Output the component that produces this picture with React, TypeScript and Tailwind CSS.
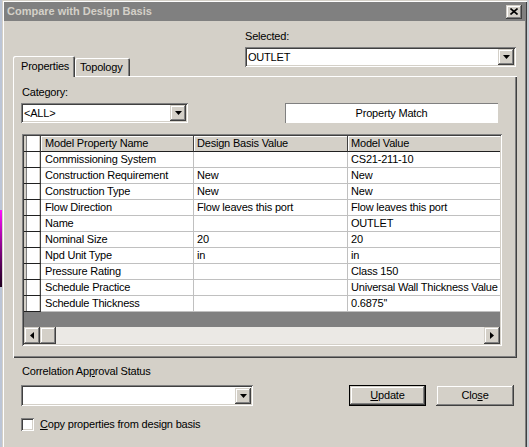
import React from "react";

const raised =
  "shadow-[inset_-1px_-1px_#404040,inset_1px_1px_#d4d0c8,inset_-2px_-2px_#808080,inset_2px_2px_#ffffff]";
const sunken =
  "shadow-[inset_1px_1px_#808080,inset_-1px_-1px_#ffffff,inset_2px_2px_#404040,inset_-2px_-2px_#d4d0c8]";

function DownArrow() {
  return (
    <svg width="7" height="4" viewBox="0 0 7 4">
      <polygon points="0,0 7,0 3.5,4" fill="#000" />
    </svg>
  );
}

function DropBtn() {
  return (
    <div className={`w-[16px] h-[16px] bg-[#d4d0c8] flex items-center justify-center ${raised}`}>
      <DownArrow />
    </div>
  );
}

function Combo({ text, w, h }: { text: string; w: string; h: string }) {
  return (
    <div className={`${w} ${h} bg-white ${sunken} p-[2px] flex items-center`}>
      <div className="flex-1 pl-[1px] leading-[13px] whitespace-nowrap overflow-hidden">{text}</div>
      <DropBtn />
    </div>
  );
}

type Row = [string, string, string];
const rows: Row[] = [
  ["Commissioning System", "", "CS21-211-10"],
  ["Construction Requirement", "New", "New"],
  ["Construction Type", "New", "New"],
  ["Flow Direction", "Flow leaves this port", "Flow leaves this port"],
  ["Name", "", "OUTLET"],
  ["Nominal Size", "20", "20"],
  ["Npd Unit Type", "in", "in"],
  ["Pressure Rating", "", "Class 150"],
  ["Schedule Practice", "", "Universal Wall Thickness Value"],
  ["Schedule Thickness", "", "0.6875''"],
];

function RowHead() {
  return (
    <div className="w-[17px] h-full shrink-0 bg-[#d4d0c8] border-r border-b border-r-[#404040] border-b-[#202020] pl-[2px]">
      <div className="w-[13px] h-full bg-white border-l border-[#808080]" />
    </div>
  );
}

function Grid() {
  return (
    <div className={`w-[480px] h-[212px] ml-[9px] bg-white ${sunken} p-[2px]`}>
      <div className="w-full h-full flex flex-col overflow-hidden">
        {/* header */}
        <div className="h-[16px] flex bg-[#d4d0c8] shrink-0">
          <RowHead />
          <div className="w-[153px] h-full shrink-0 border-r border-b border-r-[#404040] border-b-[#202020] pl-[4px] leading-[15px] shadow-[inset_1px_1px_#ffffff] whitespace-nowrap">
            Model Property Name
          </div>
          <div className="w-[154px] h-full shrink-0 border-r border-b border-r-[#404040] border-b-[#202020] pl-[3px] leading-[15px] shadow-[inset_1px_1px_#ffffff] whitespace-nowrap">
            Design Basis Value
          </div>
          <div className="flex-1 h-full border-b border-b-[#202020] pl-[3px] leading-[15px] shadow-[inset_1px_1px_#ffffff] whitespace-nowrap">
            Model Value
          </div>
        </div>
        {rows.map((r) => (
          <div key={r[0]} className="h-[16px] flex shrink-0">
            <RowHead />
            <div className="w-[153px] h-full shrink-0 border-r border-b border-[#c0c0c0] pl-[4px] leading-[15px] whitespace-nowrap overflow-hidden">
              {r[0]}
            </div>
            <div className="w-[154px] h-full shrink-0 border-r border-b border-[#c0c0c0] pl-[3px] leading-[15px] whitespace-nowrap overflow-hidden">
              {r[1]}
            </div>
            <div className="flex-1 h-full border-b border-[#c0c0c0] pl-[3px] leading-[15px] whitespace-nowrap overflow-hidden">
              {r[2]}
            </div>
          </div>
        ))}
        <div className="h-[15px] shrink-0 bg-[#808080]" />
        {/* scrollbar */}
        <div className="h-[17px] shrink-0 flex bg-[#ebe9e5]">
          <div className={`w-[16px] h-[17px] bg-[#d4d0c8] flex items-center justify-center ${raised}`}>
            <svg width="4" height="7" viewBox="0 0 4 7">
              <polygon points="4,0 4,7 0,3.5" fill="#000" />
            </svg>
          </div>
          <div className={`w-[16px] h-[17px] bg-[#d4d0c8] ${raised}`} />
          <div className="flex-1" />
          <div className={`w-[16px] h-[17px] bg-[#d4d0c8] flex items-center justify-center ${raised}`}>
            <svg width="4" height="7" viewBox="0 0 4 7">
              <polygon points="0,0 0,7 4,3.5" fill="#000" />
            </svg>
          </div>
        </div>
      </div>
    </div>
  );
}

export default function App() {
  return (
    <div className="w-[529px] h-[447px] flex overflow-hidden font-['Liberation_Sans',Arial,sans-serif] text-[11px] text-black tracking-[-0.2px] select-none">
      {/* desktop strip */}
      <div className="w-[2px] h-full flex flex-col shrink-0">
        <div className="h-[210px] bg-[#bcc5d6]" />
        <div className="h-[77px] bg-linear-to-b from-[#ff10ff] to-[#200020]" />
        <div className="flex-1 bg-[#bcc5d6]" />
      </div>

      {/* window */}
      <div className="w-[525px] h-full shrink-0 bg-[#d4d0c8] pt-[2px] px-[2px] flex flex-col shadow-[inset_1px_1px_#d4d0c8,inset_2px_2px_#ffffff,inset_-1px_0_#404040,inset_-2px_0_#808080]">
        {/* title bar */}
        <div className="h-[19px] shrink-0 bg-[#808080] flex items-center pl-[3px] pr-[3px]">
          <div className="flex-1 font-bold text-[11px] tracking-[0px] text-[#d4d0c8] leading-[13px]">
            Compare with Design Basis
          </div>
          <div className={`w-[16px] h-[14px] bg-[#d4d0c8] flex items-center justify-center ${raised}`}>
            <svg width="8" height="7" viewBox="0 0 8 7">
              <path d="M0.5 0.5 L7.5 6.5 M7.5 0.5 L0.5 6.5" stroke="#000" strokeWidth="1.6" />
            </svg>
          </div>
        </div>

        {/* top area: tabs + selected */}
        <div className="h-[55px] shrink-0 flex items-end">
          <div className="ml-[9px] flex items-end -mb-[1px] relative z-10">
            <div className="w-[62px] h-[21px] bg-[#d4d0c8] rounded-t-[2px] pl-[8px] pt-[4px] leading-[13px] shadow-[inset_1px_1px_#ffffff,inset_-1px_0_#404040,inset_-2px_0_#808080]">
              Properties
            </div>
            <div className="w-[55px] h-[18px] mb-[1px] bg-[#d4d0c8] rounded-t-[2px] pl-[5px] pt-[3px] leading-[13px] shadow-[inset_1px_1px_#ffffff,inset_-1px_0_#404040,inset_-2px_0_#808080]">
              Topology
            </div>
          </div>
          <div className="ml-auto mr-[9px] mb-[9px] w-[271px] flex flex-col">
            <div className="leading-[13px]">Selected:</div>
            <div className="mt-[4px]">
              <Combo text="OUTLET" w="w-[271px]" h="h-[20px]" />
            </div>
          </div>
        </div>

        {/* tab panel */}
        <div className="ml-[9px] w-[504px] h-[282px] shrink-0 flex flex-col shadow-[inset_1px_1px_#ffffff,inset_-1px_-1px_#404040,inset_-2px_-2px_#808080]">
          <div className="mt-[10px] ml-[9px] leading-[13px]">Category:</div>
          <div className="mt-[4px] flex items-center">
            <div className="ml-[8px]">
              <Combo text="<ALL>" w="w-[167px]" h="h-[20px]" />
            </div>
            <div className="ml-auto mr-[19px] w-[213px] h-[20px] bg-white shadow-[inset_1px_1px_#808080,inset_-1px_-1px_#ffffff] flex items-center justify-center leading-[13px]">
              Property Match
            </div>
          </div>
          <div className="mt-[11px]">
            <Grid />
          </div>
        </div>

        {/* bottom */}
        <div className="mt-[7px] ml-[18px] leading-[13px]">
          Correlation Ap<span className="underline">p</span>roval Status
        </div>
        <div className="mt-[7px] h-[21px] flex items-center">
          <div className="ml-[17px]">
            <Combo text="" w="w-[232px]" h="h-[21px]" />
          </div>
          <div className="ml-auto w-[77px] h-[21px] border border-black">
            <div className={`w-full h-full bg-[#d4d0c8] flex items-center justify-center leading-[13px] ${raised}`}>
              <span className="underline">U</span>pdate
            </div>
          </div>
          <div className={`ml-[10px] mr-[11px] w-[78px] h-[21px] bg-[#d4d0c8] flex items-center justify-center leading-[13px] ${raised}`}>
            Clo<span className="underline">s</span>e
          </div>
        </div>
        <div className="mt-[12px] ml-[17px] flex items-center h-[13px]">
          <div className={`w-[13px] h-[13px] bg-white ${sunken}`} />
          <div className="ml-[6px] leading-[13px]">
            <span className="underline">C</span>opy properties from design basis
          </div>
        </div>
      </div>

      <div className="w-[2px] h-full shrink-0 bg-[#c8ccd4]" />
    </div>
  );
}
